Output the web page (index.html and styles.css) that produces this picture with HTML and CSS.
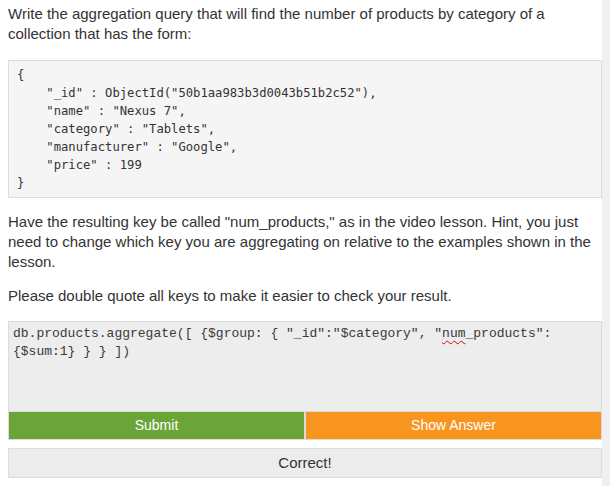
FILE: index.html
```html
<!DOCTYPE html>
<html>
<head>
<meta charset="utf-8">
<link rel="stylesheet" href="styles.css">
</head>
<body>
<div class="page">
  <div class="content">
    <p class="text intro">Write the aggregation query that will find the number of products by category of a collection that has the form:</p>
<pre class="code">{
    "_id" : ObjectId("50b1aa983b3d0043b51b2c52"),
    "name" : "Nexus 7",
    "category" : "Tablets",
    "manufacturer" : "Google",
    "price" : 199
}</pre>
    <p class="text">Have the resulting key be called "num_products," as in the video lesson. Hint, you just need to change which key you are aggregating on relative to the examples shown in the lesson.</p>
    <p class="text last">Please double quote all keys to make it easier to check your result.</p>
    <div class="answer">db.products.aggregate([ {$group: { "_id":"$category", "<span class="spell">num</span>_products": {$sum:1} } } ])</div>
    <div class="buttons">
      <div class="btn submit">Submit</div>
      <div class="btn show">Show Answer</div>
    </div>
    <div class="result">Correct!</div>
  </div>
  <div class="scrollbar"></div>
</div>
</body>
</html>
```
FILE: styles.css
```css
html, body {
  margin: 0;
  padding: 0;
  background: #ffffff;
}
.page {
  display: flex;
  height: 486px;
  overflow: hidden;
}
.content {
  width: 594px;
  margin-left: 8px;
  padding-top: 4px;
  font-family: "Liberation Sans", Arial, sans-serif;
  font-size: 15px;
  color: #333333;
}
.text {
  margin: 0 0 14px;
  line-height: 20px;
}
.intro {
  margin-bottom: 16px;
}
.last {
  margin-bottom: 15px;
}
.code {
  margin: 0 0 14px;
  padding: 5px 8px;
  border: 1px solid #dcdcdc;
  background: #f5f5f5;
  font-family: "DejaVu Sans Mono", monospace;
  font-size: 12.2px;
  line-height: 18px;
  color: #333333;
}
.answer {
  height: 84px;
  padding: 3px 4px 2px;
  border: 1px solid #dcdcdc;
  border-bottom: none;
  background: #ededed;
  font-family: "Liberation Mono", "Courier New", monospace;
  font-size: 13px;
  line-height: 18px;
  color: #3a3a3a;
  white-space: pre-wrap;
}
.spell {
  text-decoration: underline wavy #e00000;
  text-decoration-thickness: 1px;
  text-underline-offset: 3px;
}
.buttons {
  display: flex;
  gap: 2px;
  padding: 1px;
  background: #dcdcdc;
}
.btn {
  flex: 1;
  height: 27px;
  line-height: 27px;
  text-align: center;
  font-size: 14px;
  color: #ffffff;
}
.submit {
  background: #6ba539;
}
.show {
  background: #f7951f;
}
.result {
  margin-top: 8px;
  height: 28px;
  line-height: 28px;
  border: 1px solid #dcdcdc;
  background: #ececec;
  text-align: center;
  color: #333333;
}
.scrollbar {
  width: 8px;
  margin-left: auto;
  background: #f0f0f0;
}
```
